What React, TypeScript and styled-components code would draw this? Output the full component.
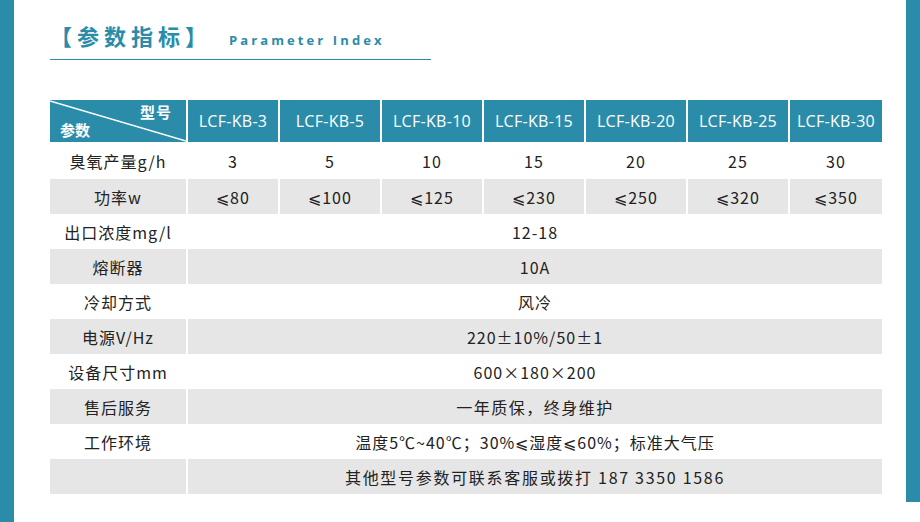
import React from 'react';
import styled, {createGlobalStyle} from 'styled-components';

const TEAL = '#2b8ca9';
const GRAY = '#e6e6e6';

const GlobalStyle = createGlobalStyle`
  html, body {
    margin: 0;
    padding: 0;
    background: #fff;
  }
  body {
    font-family: 'Noto Sans CJK SC', 'Noto Sans', sans-serif;
    color: #222;
  }
`;

const Page = styled.div`
  display: flex;
  width: 920px;
  height: 522px;
  overflow: hidden;
`;

const SideBar = styled.div<{$short?: boolean}>`
  flex: 0 0 14px;
  height: ${p => (p.$short ? '502px' : '100%')};
  background: ${TEAL};
`;

const Main = styled.div`
  flex: 1;
  padding: 0 0 0 36px;
`;

const TitleRow = styled.div`
  display: flex;
  align-items: baseline;
  width: 381px;
  height: 60px;
  box-sizing: border-box;
  padding: 20px 0 0 0;
  border-bottom: 1.5px solid ${TEAL};
`;

const TitleCn = styled.h1`
  margin: 0;
  font-size: 22px;
  font-weight: 700;
  letter-spacing: 5px;
  color: ${TEAL};
  line-height: 30px;
`;

const TitleEn = styled.span`
  margin-left: 17px;
  font-family: 'Open Sans', 'Noto Sans', sans-serif;
  font-size: 13px;
  font-weight: 700;
  letter-spacing: 3.1px;
  color: ${TEAL};
`;

const Table = styled.div`
  margin-top: 40px;
  display: grid;
  grid-template-columns: 136px 90px 100px 100px 100px 100px 100px 92px;
  grid-template-rows: 42px 37px repeat(9, 35px);
  column-gap: 2px;
  width: 832px;
`;

const Cell = styled.div<{$gray?: boolean; $span?: number; $spacing?: number}>`
  display: flex;
  align-items: center;
  justify-content: center;
  font-size: 16px;
  letter-spacing: ${p => p.$spacing ?? 1}px;
  color: #222;
  white-space: nowrap;
  background: ${p => (p.$gray ? GRAY : '#fff')};
  grid-column: ${p => (p.$span ? `span ${p.$span}` : 'auto')};
`;

const HeadCell = styled.div`
  display: flex;
  align-items: center;
  justify-content: center;
  background: ${TEAL};
  color: #fff;
  font-family: 'Open Sans', 'Noto Sans', sans-serif;
  font-size: 16px;
  letter-spacing: 0.3px;
  white-space: nowrap;
`;

const CornerCell = styled.div`
  position: relative;
  background: ${TEAL};
  color: #fff;
  font-size: 15px;
  font-weight: 700;
`;

const CornerTop = styled.span`
  position: absolute;
  right: 14px;
  top: 1px;
  letter-spacing: 1px;
`;

const CornerBottom = styled.span`
  position: absolute;
  left: 10px;
  bottom: 2px;
`;

const Diagonal = styled.svg`
  position: absolute;
  inset: 0;
`;

const models = ['LCF-KB-3', 'LCF-KB-5', 'LCF-KB-10', 'LCF-KB-15', 'LCF-KB-20', 'LCF-KB-25', 'LCF-KB-30'];

const perModel: {label: string; values: string[]}[] = [
  {label: '臭氧产量g/h', values: ['3', '5', '10', '15', '20', '25', '30']},
  {label: '功率w', values: ['⩽80', '⩽100', '⩽125', '⩽230', '⩽250', '⩽320', '⩽350']},
];

const shared: {label: string; value: string; spacing?: number}[] = [
  {label: '出口浓度mg/l', value: '12-18'},
  {label: '熔断器', value: '10A'},
  {label: '冷却方式', value: '风冷'},
  {label: '电源V/Hz', value: '220±10%/50±1'},
  {label: '设备尺寸mm', value: '600×180×200'},
  {label: '售后服务', value: '一年质保，终身维护', spacing: 1.5},
  {label: '工作环境', value: '温度5℃~40℃；30%⩽湿度⩽60%；标准大气压'},
  {label: '', value: '其他型号参数可联系客服或拨打 187 3350 1586', spacing: 1.7},
];

function App() {
  return (
    <Page>
      <GlobalStyle />
      <SideBar />
      <Main>
        <TitleRow>
          <TitleCn>【参数指标】</TitleCn>
          <TitleEn>Parameter Index</TitleEn>
        </TitleRow>

        <Table>
          <CornerCell>
            <Diagonal width="136" height="42" viewBox="0 0 136 42">
              <line x1="0" y1="1" x2="136" y2="41" stroke="#fff" strokeWidth="1.4" />
            </Diagonal>
            <CornerTop>型号</CornerTop>
            <CornerBottom>参数</CornerBottom>
          </CornerCell>
          {models.map(m => (
            <HeadCell key={m}>{m}</HeadCell>
          ))}

          {perModel.map((row, i) => (
            <React.Fragment key={row.label}>
              <Cell $gray={i % 2 === 1}>{row.label}</Cell>
              {row.values.map((v, j) => (
                <Cell key={j} $gray={i % 2 === 1}>
                  {v}
                </Cell>
              ))}
            </React.Fragment>
          ))}

          {shared.map((row, i) => (
            <React.Fragment key={row.value}>
              <Cell $gray={i % 2 === 1}>{row.label}</Cell>
              <Cell $gray={i % 2 === 1} $span={7} $spacing={row.spacing}>
                {row.value}
              </Cell>
            </React.Fragment>
          ))}
        </Table>
      </Main>
      <SideBar $short />
    </Page>
  );
}

export default App;
